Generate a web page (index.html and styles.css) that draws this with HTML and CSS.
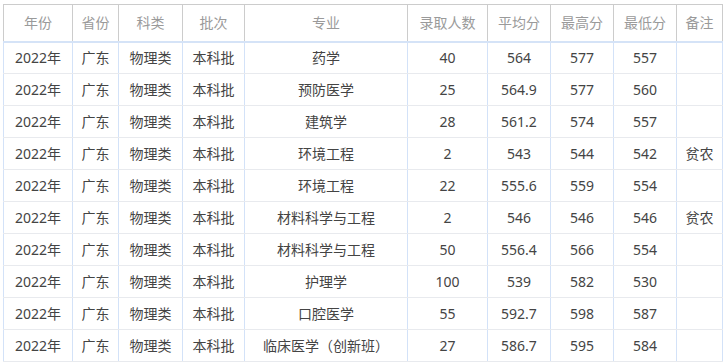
FILE: index.html
```html
<!DOCTYPE html>
<html lang="zh">
<head>
<meta charset="utf-8">
<link rel="stylesheet" href="styles.css">
</head>
<body>
<div class="wrap">
<table class="score">
<colgroup>
<col class="c1"><col class="c2"><col class="c3"><col class="c4"><col class="c5"><col class="c6"><col class="c7"><col class="c8"><col class="c9"><col class="c10">
</colgroup>
<thead>
<tr><th>年份</th><th>省份</th><th>科类</th><th>批次</th><th>专业</th><th>录取人数</th><th>平均分</th><th>最高分</th><th>最低分</th><th>备注</th></tr>
</thead>
<tbody>
<tr><td>2022年</td><td>广东</td><td>物理类</td><td>本科批</td><td>药学</td><td>40</td><td>564</td><td>577</td><td>557</td><td></td></tr>
<tr><td>2022年</td><td>广东</td><td>物理类</td><td>本科批</td><td>预防医学</td><td>25</td><td>564.9</td><td>577</td><td>560</td><td></td></tr>
<tr><td>2022年</td><td>广东</td><td>物理类</td><td>本科批</td><td>建筑学</td><td>28</td><td>561.2</td><td>574</td><td>557</td><td></td></tr>
<tr><td>2022年</td><td>广东</td><td>物理类</td><td>本科批</td><td>环境工程</td><td>2</td><td>543</td><td>544</td><td>542</td><td>贫农</td></tr>
<tr><td>2022年</td><td>广东</td><td>物理类</td><td>本科批</td><td>环境工程</td><td>22</td><td>555.6</td><td>559</td><td>554</td><td></td></tr>
<tr><td>2022年</td><td>广东</td><td>物理类</td><td>本科批</td><td>材料科学与工程</td><td>2</td><td>546</td><td>546</td><td>546</td><td>贫农</td></tr>
<tr><td>2022年</td><td>广东</td><td>物理类</td><td>本科批</td><td>材料科学与工程</td><td>50</td><td>556.4</td><td>566</td><td>554</td><td></td></tr>
<tr><td>2022年</td><td>广东</td><td>物理类</td><td>本科批</td><td>护理学</td><td>100</td><td>539</td><td>582</td><td>530</td><td></td></tr>
<tr><td>2022年</td><td>广东</td><td>物理类</td><td>本科批</td><td>口腔医学</td><td>55</td><td>592.7</td><td>598</td><td>587</td><td></td></tr>
<tr><td>2022年</td><td>广东</td><td>物理类</td><td>本科批</td><td>临床医学（创新班）</td><td>27</td><td>586.7</td><td>595</td><td>584</td><td></td></tr>
</tbody>
</table>
</div>
</body>
</html>
```

FILE: styles.css
```css
html, body {
  margin: 0;
  padding: 0;
  background: #fff;
}
.wrap {
  padding: 4px 0 0 3px;
}
.score {
  border-collapse: collapse;
  table-layout: fixed;
  width: 720px;
  font-family: "Noto Sans", "Noto Sans CJK SC", sans-serif;
  font-size: 14px;
  line-height: 20px;
}
.c1 { width: 69px; }
.c2 { width: 46px; }
.c3 { width: 64px; }
.c4 { width: 62px; }
.c5 { width: 163px; }
.c6 { width: 80px; }
.c7 { width: 63px; }
.c8 { width: 63px; }
.c9 { width: 63px; }
.c10 { width: 46px; }
.score thead tr {
  height: 37px;
}
.score tbody tr {
  height: 32px;
}
.score th {
  padding: 0;
  border: 1px solid #cccccc;
  border-bottom: 2px solid #d5e3f7;
  color: #9a9a9a;
  font-weight: normal;
  text-align: center;
  vertical-align: middle;
}
.score td {
  padding: 0;
  border-left: 1px solid #d3e2f8;
  border-right: 1px solid #d3e2f8;
  border-bottom: 1px solid #e8eaee;
  color: #444444;
  text-align: center;
  vertical-align: middle;
}
```
